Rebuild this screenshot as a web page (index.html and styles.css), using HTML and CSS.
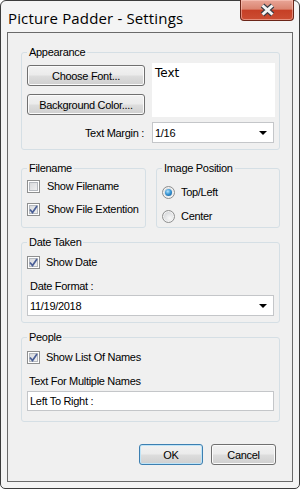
FILE: index.html
```html
<!DOCTYPE html>
<html>
<head>
    <title>Picture Padder - Settings</title>
    <link rel="stylesheet" href="styles.css">
</head>
<body>
    <div class="window">
        <div class="titlebar">
            <span class="title">Picture Padder - Settings</span>
            <div class="close">
                <svg width="17" height="14" viewBox="0 0 17 14">
                    <path d="M3.5 2.5 L13.5 11.5 M13.5 2.5 L3.5 11.5" stroke="#3a3d46" stroke-width="5.2" stroke-linecap="butt" fill="none"/>
                    <path d="M3.5 2.5 L13.5 11.5 M13.5 2.5 L3.5 11.5" stroke="#f4f4f4" stroke-width="3" stroke-linecap="butt" fill="none"/>
                </svg>
            </div>
        </div>
        <div class="client">
            <fieldset class="group appearance">
                <legend>Appearance</legend>
                <div class="appearance-grid">
                    <div class="btn-stack">
                        <button class="btn">Choose Font...</button>
                        <button class="btn">Background Color....</button>
                    </div>
                    <div class="preview">Text</div>
                    <div class="margin-label">Text Margin :</div>
                    <div class="combo small"><span>1/16</span><i class="arrow"></i></div>
                </div>
            </fieldset>

            <div class="group-row">
                <fieldset class="group filename">
                    <legend>Filename</legend>
                    <div class="check-row"><span class="box"></span>Show Filename</div>
                    <div class="check-row"><span class="box checked"><svg width="11" height="11" viewBox="0 0 11 11"><path d="M2 5.5 L4.5 8.5 L9 2" stroke="#4a5f97" stroke-width="1.7" fill="none"/></svg></span>Show File Extention</div>
                </fieldset>
                <fieldset class="group position">
                    <legend>Image Position</legend>
                    <div class="radio-row"><span class="radio on"></span>Top/Left</div>
                    <div class="radio-row"><span class="radio"></span>Center</div>
                </fieldset>
            </div>

            <fieldset class="group date">
                <legend>Date Taken</legend>
                <div class="check-row"><span class="box checked"><svg width="11" height="11" viewBox="0 0 11 11"><path d="M2 5.5 L4.5 8.5 L9 2" stroke="#4a5f97" stroke-width="1.7" fill="none"/></svg></span>Show Date</div>
                <div class="field-label">Date Format :</div>
                <div class="combo wide"><span>11/19/2018</span><i class="arrow"></i></div>
            </fieldset>

            <fieldset class="group people">
                <legend>People</legend>
                <div class="check-row"><span class="box checked"><svg width="11" height="11" viewBox="0 0 11 11"><path d="M2 5.5 L4.5 8.5 L9 2" stroke="#4a5f97" stroke-width="1.7" fill="none"/></svg></span>Show List Of Names</div>
                <div class="field-label people-label">Text For Multiple Names</div>
                <div class="textbox">Left To Right :</div>
            </fieldset>

            <div class="actions">
                <button class="btn default ok">OK</button>
                <button class="btn cancel">Cancel</button>
            </div>
        </div>
    </div>
</body>
</html>
```

FILE: styles.css
```css
body {
    margin: 0;
    font-family: "Liberation Sans", Arial, sans-serif;
    font-size: 11px;
    letter-spacing: -0.3px;
    color: #000;
    background: #ffffff;
}
.window {
    width: 300px;
    height: 489px;
    box-sizing: border-box;
    border: 1px solid #3c3c3c;
    border-radius: 6px 6px 5px 5px;
    background: #f4f4f4;
    padding: 0 6px 6px;
    display: flex;
    flex-direction: column;
}
.titlebar {
    height: 31px;
    flex-shrink: 0;
    display: flex;
    justify-content: space-between;
    align-items: flex-start;
    padding-left: 1px;
}
.title {
    font-family: "Open Sans", "Noto Sans", sans-serif;
    font-size: 15px;
    letter-spacing: 0.15px;
    line-height: 18px;
    margin-top: 8px;
    color: #000;
}
.close {
    width: 54px;
    height: 21px;
    box-sizing: border-box;
    margin-top: -1px;
    margin-right: -1px;
    border: 1px solid #6b2518;
    border-top: none;
    border-radius: 0 0 4px 4px;
    background: linear-gradient(#e8a597 0%, #db8571 45%, #c63f26 52%, #cc4e33 100%);
    box-shadow: inset 0 0 0 1px rgba(255, 210, 200, 0.5);
    display: flex;
    align-items: center;
    justify-content: center;
}
.client {
    flex: 1;
    border: 1px solid #6a6a6a;
    background: #f0f0f0;
    padding: 0 12px 0 13px;
    display: flex;
    flex-direction: column;
}

/* group boxes */
.group {
    margin: 0;
    padding: 0 4px 6px 5px;
    border: 1px solid #d5dfe5;
    border-radius: 3px;
    min-width: 0;
}
.group legend {
    padding: 0 2px;
    line-height: 13px;
}
.appearance {
    margin-top: 13px;
    padding-top: 4px;
}
.appearance-grid {
    display: grid;
    grid-template-columns: 118px 123px;
    column-gap: 7px;
    row-gap: 5px;
}
.btn-stack {
    display: flex;
    flex-direction: column;
    gap: 8px;
    padding-top: 2px;
}
.preview {
    height: 54px;
    box-sizing: border-box;
    background: #fff;
    padding: 3px 3px;
    font-family: "DejaVu Sans", sans-serif;
    font-size: 12px;
    letter-spacing: 0;
    line-height: 15px;
}
.margin-label {
    align-self: center;
    text-align: right;
    padding-right: 1px;
}

.group-row {
    display: flex;
    gap: 10px;
    margin-top: 12px;
}
.filename {
    width: 125px;
    box-sizing: border-box;
    padding-top: 1px;
    padding-bottom: 8px;
    display: flex;
    flex-direction: column;
    gap: 3px;
}
.position {
    flex: 1;
    padding-top: 7px;
    padding-bottom: 0;
    display: flex;
    flex-direction: column;
    gap: 4px;
}
.date {
    margin-top: 8px;
    padding-top: 3px;
}
.people {
    margin-top: 8px;
    padding-top: 3px;
    padding-bottom: 10px;
}

/* checkboxes and radios */
.check-row, .radio-row {
    height: 20px;
    display: flex;
    align-items: center;
    gap: 6px;
    white-space: nowrap;
}
.filename .check-row {
    gap: 7px;
}
.box {
    width: 13px;
    height: 13px;
    box-sizing: border-box;
    border: 1px solid #8e8f8f;
    background: linear-gradient(135deg, #d2d4d7, #f6f6f6);
    box-shadow: inset 0 0 0 1px #ffffff, inset 0 0 0 2px #b4b8be;
    display: flex;
    align-items: center;
    justify-content: center;
    flex-shrink: 0;
}
.radio {
    width: 13px;
    height: 13px;
    box-sizing: border-box;
    border: 1px solid #8e8f8f;
    border-radius: 50%;
    background: radial-gradient(circle at 60% 65%, #f8f8f8 0%, #d6d8db 70%);
    box-shadow: inset 0 0 0 1px #f4f4f4;
    flex-shrink: 0;
    display: flex;
    align-items: center;
    justify-content: center;
}
.radio.on::after {
    content: "";
    width: 7px;
    height: 7px;
    border-radius: 50%;
    background: radial-gradient(circle at 40% 35%, #b5e2fb 0%, #3a98d6 45%, #0d4f8c 100%);
}

/* inputs */
.field-label {
    margin-top: 7px;
    line-height: 14px;
    padding-left: 3px;
}
.people-label {
    padding-left: 2px;
}
.combo, .textbox {
    box-sizing: border-box;
    border: 1px solid #c4c6c9;
    background: #fff;
    display: flex;
    align-items: center;
    padding-left: 2px;
}
.combo {
    height: 21px;
    justify-content: space-between;
    padding-right: 6px;
}
.combo.small {
    width: 122px;
}
.combo.wide {
    width: 247px;
    margin-top: 2px;
}
.arrow {
    width: 0;
    height: 0;
    border-left: 4px solid transparent;
    border-right: 4px solid transparent;
    border-top: 4px solid #000;
}
.textbox {
    width: 247px;
    height: 20px;
    margin-top: 3px;
}

/* buttons */
.btn {
    font-family: inherit;
    font-size: 11px;
    letter-spacing: -0.3px;
    color: #000;
    height: 21px;
    padding: 0;
    border: 1px solid #707070;
    border-radius: 3px;
    background: linear-gradient(#f2f2f2 0%, #ebebeb 48%, #dddddd 52%, #cfcfcf 100%);
    box-shadow: inset 0 0 0 1px #fbfbfb;
}
.btn.default {
    border-color: #3c7fb1;
    box-shadow: inset 0 0 0 1px #bfe4f7;
}
.actions {
    margin-top: 22px;
    display: flex;
    justify-content: flex-end;
    gap: 8px;
    margin-right: 4px;
}
.ok {
    width: 64px;
}
.cancel {
    width: 65px;
}
```
